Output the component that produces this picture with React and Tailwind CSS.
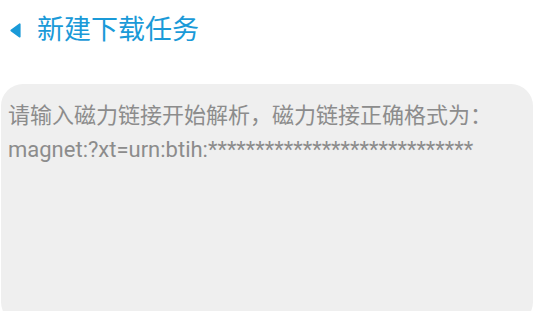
import React from "react";

const App = () => {
  return (
    <div
      className="w-[534px] h-[311px] bg-white overflow-hidden"
      style={{ fontFamily: 'Roboto, "Noto Sans CJK SC", sans-serif' }}
    >
      {/* header */}
      <div className="flex items-center h-[60px] pl-[10px]">
        <svg width="11" height="15" viewBox="0 0 11 15" className="mr-[16px]">
          <path d="M1.2 7.5 L9.8 1.2 L9.8 13.8 Z" fill="#1a9ad8" stroke="#1a9ad8" strokeWidth="1.6" strokeLinejoin="round" />
        </svg>
        <span className="text-[27px] text-[#1a9ad8] leading-none">新建下载任务</span>
      </div>
      {/* input */}
      <div className="mt-[24px] ml-[1px] mr-[1px] h-[240px] bg-[#efefef] rounded-[22px] pt-[15px] pl-[7px] text-[22px] leading-[34px] text-[#8c8c8c]">
        <p>请输入磁力链接开始解析，磁力链接正确格式为：</p>
        <p>magnet:?xt=urn:btih:****************************</p>
      </div>
    </div>
  );
};

export default App;
